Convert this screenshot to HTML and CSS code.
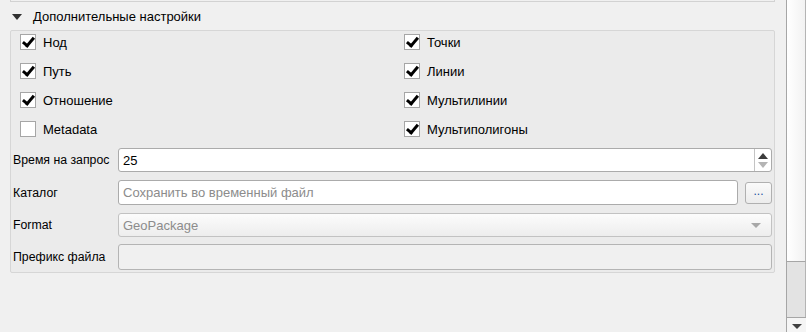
FILE: index.html
```html
<!DOCTYPE html>
<html lang="ru">
<head>
    <meta charset="UTF-8">
    <title>Дополнительные настройки</title>
    <link rel="stylesheet" href="styles.css">
</head>
<body>
    <div class="window">
        <div class="main">
            <div class="prev-box"></div>

            <div class="section-header">
                <svg class="toggle" width="10" height="6" viewBox="0 0 10 6"><path d="M0 0 H10 L5 6 Z" fill="#303030"/></svg>
                <span>Дополнительные настройки</span>
            </div>

            <div class="group">
                <div class="checks">
                    <label class="check"><span class="box on"></span>Нод</label>
                    <label class="check"><span class="box on"></span>Точки</label>
                    <label class="check"><span class="box on"></span>Путь</label>
                    <label class="check"><span class="box on"></span>Линии</label>
                    <label class="check"><span class="box on"></span>Отношение</label>
                    <label class="check"><span class="box on"></span>Мультилинии</label>
                    <label class="check"><span class="box"></span>Metadata</label>
                    <label class="check"><span class="box on"></span>Мультиполигоны</label>
                </div>

                <div class="form-row row-spin">
                    <span class="form-label">Время на запрос</span>
                    <div class="spinbox">
                        <span class="value">25</span>
                        <div class="spin-buttons">
                            <svg width="10" height="6" viewBox="0 0 10 6"><path d="M0 6 L5 0 L10 6 Z" fill="#3c3c3c"/></svg>
                            <svg width="10" height="6" viewBox="0 0 10 6"><path d="M0 0 H10 L5 6 Z" fill="#b4b4b4"/></svg>
                        </div>
                    </div>
                </div>

                <div class="form-row row-dir">
                    <span class="form-label">Каталог</span>
                    <div class="line-edit">Сохранить во временный файл</div>
                    <button class="browse">...</button>
                </div>

                <div class="form-row row-format">
                    <span class="form-label">Format</span>
                    <div class="combo">
                        <span>GeoPackage</span>
                        <svg width="10" height="5" viewBox="0 0 10 5"><path d="M0 0 H10 L5 5 Z" fill="#a8a8a8"/></svg>
                    </div>
                </div>

                <div class="form-row row-prefix">
                    <span class="form-label">Префикс файла</span>
                    <div class="line-edit disabled"></div>
                </div>
            </div>
        </div>

        <div class="scrollbar">
            <div class="thumb"></div>
            <div class="track"></div>
            <div class="arrow-down">
                <svg width="10" height="5" viewBox="0 0 10 5"><path d="M0 0 H10 L5 5 Z" fill="#404040"/></svg>
            </div>
        </div>
    </div>
</body>
</html>
```

FILE: styles.css
```css
body {
    margin: 0;
    padding: 0;
    background-color: #f0f0f0;
    font-family: 'Liberation Sans', Arial, sans-serif;
    font-size: 13px;
    color: #000;
}

.window {
    display: flex;
    width: 806px;
    height: 332px;
    overflow: hidden;
}

.main {
    width: 766px;
    padding-left: 10px;
    margin-right: 11px;
}

/* bottom edge of the previous panel */
.prev-box {
    height: 1px;
    border: 1px solid #d2d2d2;
    border-top: none;
}

.section-header {
    height: 28px;
    display: flex;
    align-items: center;
    padding-left: 2px;
}

.section-header .toggle {
    margin-right: 11px;
    margin-top: 1px;
}

.group {
    box-sizing: border-box;
    height: 243px;
    border: 1px solid #d6d6d6;
    border-radius: 2px;
    background-color: #ebebeb;
    padding: 3px 2px 0 1px;
}

.checks {
    display: grid;
    grid-template-columns: 384px 1fr;
    row-gap: 13px;
    margin-left: 8px;
}

.check {
    display: flex;
    align-items: center;
    height: 16px;
}

.box {
    box-sizing: border-box;
    width: 16px;
    height: 16px;
    border: 1px solid #a6a6a6;
    background-color: #fff;
    margin-right: 7px;
    position: relative;
}

.box.on::after {
    content: '';
    position: absolute;
    left: 4px;
    top: 0px;
    width: 4px;
    height: 9px;
    border-right: 3px solid #000;
    border-bottom: 3px solid #000;
    transform: rotate(40deg);
}

.form-row {
    display: flex;
    align-items: center;
}

.form-label {
    width: 105px;
    padding-left: 1px;
    flex-shrink: 0;
    font-size: 12.3px;
}

.row-spin {
    margin-top: 11px;
    height: 24px;
}

.row-dir {
    margin-top: 8px;
    height: 25px;
}

.row-format {
    margin-top: 8px;
    height: 24px;
}

.row-prefix {
    margin-top: 7px;
    height: 26px;
}

.spinbox,
.line-edit,
.combo {
    box-sizing: border-box;
    height: 100%;
    flex: 1;
    border: 1px solid #ababab;
    border-radius: 3px;
    background-color: #fff;
    display: flex;
    align-items: center;
    padding-left: 4px;
}

.spinbox {
    padding-right: 0;
}

.spinbox .value {
    flex: 1;
}

.spin-buttons {
    width: 16px;
    height: 100%;
    border-left: 1px solid #c4c4c4;
    display: flex;
    flex-direction: column;
    align-items: center;
    justify-content: center;
    gap: 3px;
}

.line-edit {
    color: #8c8c8c;
}

.line-edit.disabled {
    background-color: #f0f0f0;
    border-color: #b4b4b4;
}

.browse {
    box-sizing: border-box;
    width: 27px;
    height: 22px;
    margin-left: 7px;
    padding: 0 0 4px;
    border: 1px solid #b0b0b0;
    border-radius: 3px;
    background: linear-gradient(#fafafa, #ececec);
    font-family: 'Liberation Sans', Arial, sans-serif;
    font-size: 12px;
    color: #1a4fa0;
    line-height: 1;
}

.combo {
    justify-content: space-between;
    padding-right: 10px;
    color: #8c8c8c;
    border-color: #c2c2c2;
    background: linear-gradient(#fcfcfc, #ededed);
}

.scrollbar {
    width: 19px;
    height: 332px;
    border-left: 1px solid #a6a6a6;
    display: flex;
    flex-direction: column;
}

.thumb {
    height: 262px;
    border-right: 1px solid #b4b4b4;
    border-bottom: 1px solid #a6a6a6;
    background: linear-gradient(90deg, #fff, #f2f2f2);
    box-sizing: border-box;
}

.track {
    height: 55px;
    background-color: #e3e3e3;
    border-right: 1px solid #b4b4b4;
}

.arrow-down {
    flex: 1;
    border-top: 1px solid #a6a6a6;
    background-color: #f5f5f5;
    display: flex;
    justify-content: center;
    padding-top: 6px;
}
```
